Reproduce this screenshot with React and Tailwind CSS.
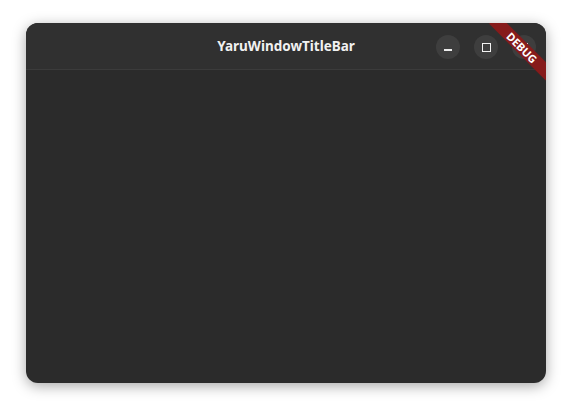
export default function App() {
    return (
        <div className="w-[572px] h-[412px] bg-white pt-[23px] pl-[26px]">
            <div className="relative w-[520px] h-[360px] rounded-[12px] overflow-hidden bg-[#2b2b2b] shadow-[0_3px_14px_rgba(0,0,0,0.35)]">
                {/* Title bar */}
                <div className="h-[47px] bg-[#303030] border-b border-[#3b3b3b] flex items-center justify-center relative">
                    <span className="text-[13.5px] font-bold text-[#f1f1f1] font-['Noto_Sans',sans-serif]">
                        YaruWindowTitleBar
                    </span>
                    <div className="absolute right-[10px] top-[12px] flex gap-[14px]">
                        <button className="w-[24px] h-[24px] rounded-full bg-[#3e3e3e] flex items-center justify-center">
                            <div className="w-[8px] h-[2px] bg-[#ececec] mt-[5px]" />
                        </button>
                        <button className="w-[24px] h-[24px] rounded-full bg-[#3e3e3e] flex items-center justify-center">
                            <div className="w-[9px] h-[9px] border border-[#f2f2f2]" />
                        </button>
                        <button className="w-[24px] h-[24px] rounded-full bg-[#3e3e3e] flex items-center justify-center">
                            <svg width="10" height="10" viewBox="0 0 10 10" stroke="#f2f2f2" strokeWidth="1">
                                <path d="M1 1L9 9M9 1L1 9" />
                            </svg>
                        </button>
                    </div>
                </div>
                {/* Debug banner */}
                <div className="absolute left-[456px] top-[18px] w-[80px] h-[13px] rotate-45 bg-[#861b1b] flex items-center justify-center">
                    <span className="text-[11px] leading-none font-bold text-white font-['Noto_Sans',sans-serif]">
                        DEBUG
                    </span>
                </div>
            </div>
        </div>
    );
}
